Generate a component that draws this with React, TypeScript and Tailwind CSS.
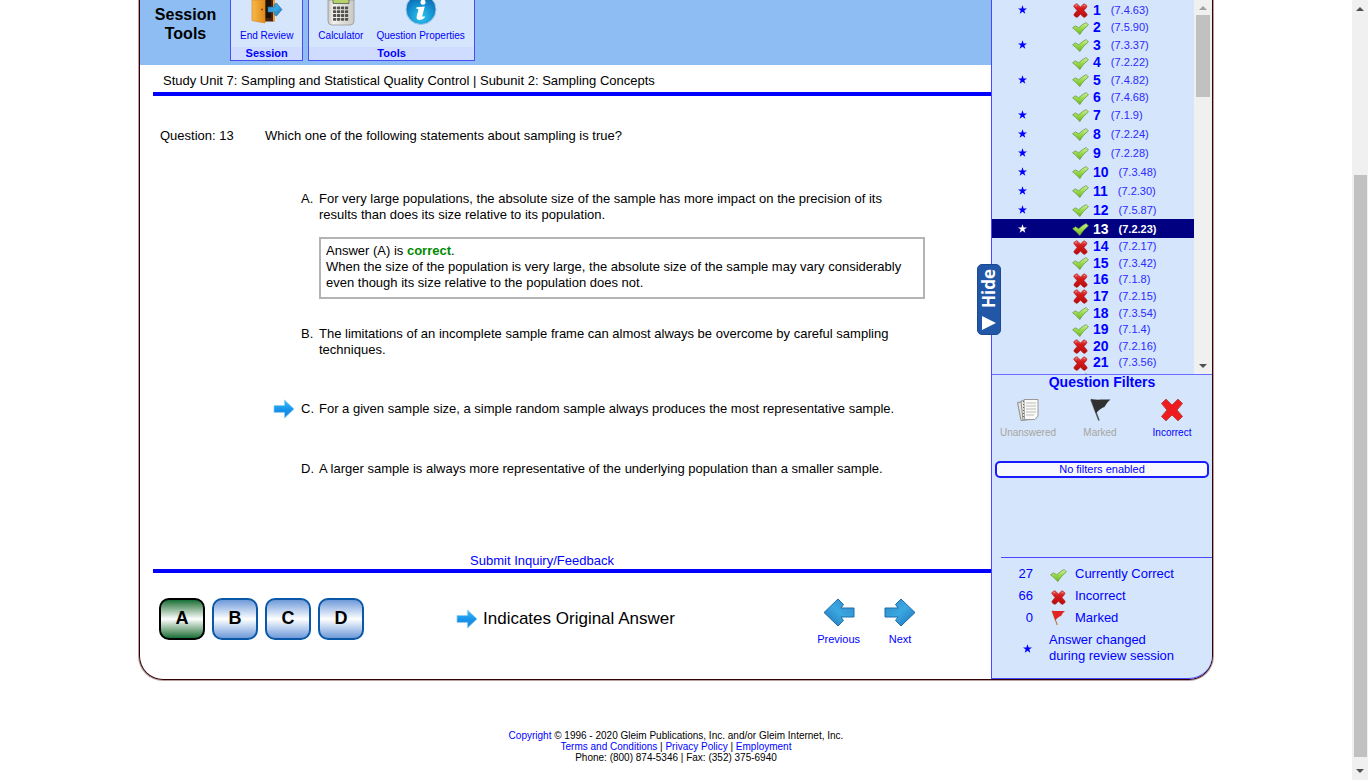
import React from "react";

type Status = "correct" | "incorrect";
type Item = { n: number; ref: string; status: Status; star?: boolean };

const c: Status = "correct";
const x: Status = "incorrect";

const reviewed: Item[] = [
  { n: 1, ref: "7.4.63", status: x, star: true },
  { n: 2, ref: "7.5.90", status: c },
  { n: 3, ref: "7.3.37", status: c, star: true },
  { n: 4, ref: "7.2.22", status: c },
  { n: 5, ref: "7.4.82", status: c, star: true },
  { n: 6, ref: "7.4.68", status: c },
  { n: 7, ref: "7.1.9", status: c, star: true },
  { n: 8, ref: "7.2.24", status: c, star: true },
  { n: 9, ref: "7.2.28", status: c, star: true },
  { n: 10, ref: "7.3.48", status: c, star: true },
  { n: 11, ref: "7.2.30", status: c, star: true },
  { n: 12, ref: "7.5.87", status: c, star: true },
  { n: 13, ref: "7.2.23", status: c, star: true },
];

const upcoming: Item[] = [
  { n: 14, ref: "7.2.17", status: x },
  { n: 15, ref: "7.3.42", status: c },
  { n: 16, ref: "7.1.8", status: x },
  { n: 17, ref: "7.2.15", status: x },
  { n: 18, ref: "7.3.54", status: c },
  { n: 19, ref: "7.1.4", status: c },
  { n: 20, ref: "7.2.16", status: x },
  { n: 21, ref: "7.3.56", status: x },
  { n: 22, ref: "7.2.19", status: c },
];

const CURRENT = 13;

function Defs() {
  return (
    <svg className="absolute h-0 w-0" aria-hidden="true">
      <defs>
        <linearGradient id="gCheck" x1="0" y1="0" x2="0" y2="1">
          <stop offset="0" stopColor="#d2f0a0" />
          <stop offset="0.45" stopColor="#9bdc4c" />
          <stop offset="1" stopColor="#6cb81c" />
        </linearGradient>
        <linearGradient id="gCross" x1="0" y1="0" x2="0" y2="1">
          <stop offset="0" stopColor="#e8605a" />
          <stop offset="0.35" stopColor="#d41c1c" />
          <stop offset="1" stopColor="#b80c0c" />
        </linearGradient>
        <linearGradient id="gArrow" x1="0" y1="0" x2="1" y2="1">
          <stop offset="0" stopColor="#2f86c8" />
          <stop offset="0.5" stopColor="#3ba8e2" />
          <stop offset="1" stopColor="#1d6fb4" />
        </linearGradient>
        <linearGradient id="gSmall" x1="0" y1="0" x2="0" y2="1">
          <stop offset="0" stopColor="#35c0fb" />
          <stop offset="0.55" stopColor="#1791ea" />
          <stop offset="1" stopColor="#2088d8" />
        </linearGradient>
        <linearGradient id="gDoor" x1="0" y1="0" x2="1" y2="0">
          <stop offset="0" stopColor="#f9b94a" />
          <stop offset="1" stopColor="#e08a18" />
        </linearGradient>
        <linearGradient id="gCalc" x1="0" y1="0" x2="1" y2="0">
          <stop offset="0" stopColor="#c4c4c0" />
          <stop offset="0.2" stopColor="#f1f1ee" />
          <stop offset="1" stopColor="#c9c9c5" />
        </linearGradient>
        <radialGradient id="gInfo" cx="0.5" cy="0.75" r="0.75">
          <stop offset="0" stopColor="#31c6f2" />
          <stop offset="0.55" stopColor="#1490d0" />
          <stop offset="1" stopColor="#0b62a8" />
        </radialGradient>
      </defs>
    </svg>
  );
}

function Check() {
  return (
    <svg className="mt-[2px] h-[13px] w-[17px] shrink-0" viewBox="0 0 17 13" aria-hidden="true">
      <path
        d="M.6 5.800 3.400 3.800 6.700 5.800C8.800 3.600 11.400 1.800 14.200.5L16.400 3C13 5.600 10.400 8.400 7.800 12.600 5.600 10 3.400 7.800.6 5.800Z"
        fill="url(#gCheck)"
        stroke="#648f48"
        strokeWidth="0.7"
        strokeLinejoin="round"
      />
    </svg>
  );
}

function Cross() {
  return (
    <svg className="mt-[2px] h-[15px] w-[17px] shrink-0" viewBox="0 0 17 15" aria-hidden="true">
      <path
        d="M1.800 2.600 4.200 .8Q5.200.5 6 1.500L8.500 4.100 11.100 1.300Q12 .6 12.800 1L15 2.800 14.600 4.400 12 7.400 15 11Q15.600 12.200 14.800 12.800L12.600 14.400 11.200 14 8.500 11.200 5.800 14 4.400 14.400 2 12.600Q1.500 11.800 2.200 10.900L5 7.400 2.200 4.200Q1.400 3.200 1.800 2.600Z"
        fill="url(#gCross)"
        stroke="#a82020"
        strokeWidth="0.5"
      />
      <path d="M3.400 3 4.800 2.300M12 2.400 13.200 2.800" stroke="#f8b0a8" strokeWidth="0.7" />
    </svg>
  );
}

function Star() {
  return (
    <svg className="h-[9px] w-[9px]" viewBox="0 0 20 19" fill="currentColor" role="img" aria-label="Answer changed">
      <path d="M10 0 12.5 7H20L14 11.5 16.2 19 10 14.5 3.8 19 6 11.5 0 7H7.500Z" />
    </svg>
  );
}

function SmallArrow() {
  return (
    <svg className="h-5 w-[22px] shrink-0" viewBox="0 0 22 20" aria-hidden="true">
      <path
        d="M1 6.500H11.500V1L21 10 11.500 19V13.500H1Z"
        fill="url(#gSmall)"
        stroke="#8ccdf6"
        strokeWidth="0.8"
        strokeLinejoin="round"
      />
    </svg>
  );
}

function BigArrow({ left }: { left?: boolean }) {
  return (
    <svg className="h-[29px] w-8" viewBox="0 0 32 29" aria-hidden="true">
      <path
        transform={left ? "translate(32 0) scale(-1 1)" : undefined}
        d="M1 10H14L11.500 6.500 17 1 31 14.500 17 28 11.500 22.500 14 19H1Z"
        fill="url(#gArrow)"
        stroke="#1f6ca8"
        strokeWidth="1"
        strokeLinejoin="round"
      />
    </svg>
  );
}

function DoorIcon() {
  return (
    <svg className="h-6 w-8" viewBox="0 0 32 24" aria-hidden="true">
      <path d="M10 0H23V21.500H10Z" fill="#4a2308" />
      <path d="M13 0H20V18H13Z" fill="#1f1008" />
      <path d="M22 0H24V21.500H22Z" fill="#f0a030" />
      <path d="M1 0H14V23L1 20.500Z" fill="url(#gDoor)" stroke="#d98a1c" strokeWidth="0.7" />
      <circle cx="11" cy="9.500" r="1" fill="#7a4308" />
      <path d="M17 7H24L23 4.500 25.500 3 31 9.500 25.500 16 23 14.500 24 12H17Z" fill="url(#gArrow)" stroke="#2272ae" strokeWidth="0.6" />
    </svg>
  );
}

function CalculatorIcon() {
  const keys = [0, 1, 2, 3].flatMap((r) => [0, 1, 2, 3].map((k) => [k, r]));
  return (
    <svg className="h-[26px] w-7" viewBox="0 0 28 26" aria-hidden="true">
      <path d="M1 0H27V21Q27 25 23 25H5Q1 25 1 21Z" fill="url(#gCalc)" stroke="#989894" strokeWidth="0.8" />
      <path d="M6 -2H22V3.500H6Z" fill="#b5d36a" stroke="#555" strokeWidth="0.8" />
      {keys.map(([k, r]) => (
        <rect key={`${k}-${r}`} x={6 + k * 4} y={6.5 + r * 3.8} width="3.2" height="2.8" rx="0.6" fill="#55524e" />
      ))}
    </svg>
  );
}

function InfoIcon() {
  return (
    <svg className="h-[26px] w-8" viewBox="0 0 32 26" aria-hidden="true">
      <circle cx="16" cy="9.500" r="15" fill="url(#gInfo)" stroke="#9ec7e6" strokeWidth="1" />
      <circle cx="18" cy="2.200" r="2.500" fill="#fff" />
      <path d="M11.500 7.200 19.800 6.400 17.200 16Q17 17.600 19.800 16L19.400 18Q15 21.200 12.200 19.200 11.200 18 11.900 15.600L13.400 9.800Q13.400 8.600 11.200 8.800Z" fill="#fff" />
    </svg>
  );
}

function PagesIcon() {
  return (
    <svg className="h-6 w-6" viewBox="0 0 24 24" aria-hidden="true">
      <path d="M1.500 4.500 12 3 14 21 5 22.500Z" fill="#e2e2df" stroke="#8d8d8a" />
      <path d="M5 3 16 2V21.500L7 22Z" fill="#f2f2ef" stroke="#8d8d8a" />
      <path d="M8 1.500H22V18L19 21.500H8.500Z" fill="#fafaf8" stroke="#999" />
      <path d="M10 5H20M10 8H20M10 11H20M10 14H20M10 17H18" stroke="#bcbcb8" />
      <path d="M7.500 3V20" stroke="#666" strokeDasharray="1 2" />
    </svg>
  );
}

function FlagIcon({ red }: { red?: boolean }) {
  return (
    <svg className={red ? "h-4 w-4" : "h-6 w-6"} viewBox="0 0 24 24" aria-hidden="true">
      <path d="M3 1.500 11 22.500" stroke={red ? "#b57a3a" : "#555"} strokeWidth="1.6" />
      <path d="M3 .8C8 2.600 14 1 22.500 1.600 19 4.500 18.500 6 16.500 9 14 9.500 10.500 12 8 15.500Z" fill={red ? "#e32222" : "#303030"} />
    </svg>
  );
}

function RedX() {
  return (
    <svg className="h-6 w-6" viewBox="0 0 24 24" aria-hidden="true">
      <path
        d="M1.500 5.500 6 1.200 12 7 18 1.200 22.500 5.500 17 12 22.500 18.500 18 22.800 12 17 6 22.800 1.500 18.500 7 12Z"
        fill="#ee1c1c"
        stroke="#b84040"
        strokeLinejoin="round"
      />
    </svg>
  );
}

function Row({ item }: { item: Item }) {
  const on = item.n === CURRENT;
  return (
    <li className={item.star ? "h-[19px] shrink-0" : item.n > CURRENT ? "min-h-0 flex-1" : "h-4 shrink-0"}>
      <a
        href="#question"
        className={`flex h-full items-center pl-[26px] ${on ? "bg-[#000080] font-bold text-white" : "text-[#0000ff]"}`}
      >
        <span className="flex w-[54px] shrink-0">{item.star && <Star />}</span>
        {item.status === "correct" ? <Check /> : <Cross />}
        <span className="ml-1 text-sm leading-4 font-bold">{item.n}</span>
        <span className={`ml-[10px] text-[11px] leading-4 ${on ? "" : "text-[#2a2aff]"}`}>({item.ref})</span>
      </a>
    </li>
  );
}

function Choice({
  letter,
  original,
  children,
}: {
  letter: string;
  original?: boolean;
  children: React.ReactNode;
}) {
  return (
    <div className="flex">
      <span className="flex h-4 w-7 shrink-0 items-center">{original && <SmallArrow />}</span>
      <span className="w-[18px] shrink-0">{letter}.</span>
      <div className="min-w-0 flex-1">{children}</div>
    </div>
  );
}

function AnswerButton({ label, active }: { label: string; active?: boolean }) {
  return (
    <button
      type="button"
      className={`h-[42px] w-[46px] rounded-[10px] border-2 pb-[2px] text-lg font-bold text-black ${
        active
          ? "border-black bg-linear-to-b from-[#0c7038] via-white to-[#0c7038]"
          : "border-[#0a58a8] bg-linear-to-b from-[#6f9ad8] via-white to-[#6f9ad8]"
      }`}
    >
      {label}
    </button>
  );
}

function Tool({ icon, label }: { icon: React.ReactNode; label: string }) {
  return (
    <button type="button" className="flex flex-col items-center whitespace-nowrap">
      <span className="flex h-7 items-start">{icon}</span>
      <span className="text-[10px] leading-4">{label}</span>
    </button>
  );
}

function ToolGroup({ title, children }: { title: string; children: React.ReactNode }) {
  return (
    <section className="flex h-[61px] flex-col border border-t-0 border-[#4a50f0] bg-[#d5e5fb] text-[#0000ff]">
      <div className="flex h-[47px] gap-[13px] px-[9px]">{children}</div>
      <h2 className="flex-1 bg-[#d0dcff] text-center text-[11px] leading-[13px] font-bold">{title}</h2>
    </section>
  );
}

function Filter({ icon, label, enabled }: { icon: React.ReactNode; label: string; enabled?: boolean }) {
  return (
    <button
      type="button"
      className={`flex flex-1 flex-col items-center gap-[3px] text-[10px] leading-4 ${
        enabled ? "text-[#0000ff]" : "text-[#a6a6a0]"
      }`}
    >
      {icon}
      {label}
    </button>
  );
}

export default function App() {
  return (
    <div className="flex min-h-screen bg-white font-['Liberation_Sans',Arial,sans-serif] text-[13px] leading-4 text-black">
      <Defs />
      <div className="flex min-w-0 flex-1 flex-col items-center">
        <div className="flex w-full max-w-[1074px] rounded-b-[24px] border border-t-0 border-[#330008] shadow-[0_0_0_1px_#b8a0a0]">
          <main className="flex min-w-0 flex-1 flex-col">
            <header className="flex h-[65px] items-start gap-[5px] bg-[#8dbdf2]">
              <h1 className="w-[85px] shrink-0 pt-[5px] pl-[6px] text-center text-base leading-[19px] font-bold">
                Session
                <br />
                Tools
              </h1>
              <ToolGroup title="Session">
                <Tool icon={<DoorIcon />} label="End Review" />
              </ToolGroup>
              <ToolGroup title="Tools">
                <Tool icon={<CalculatorIcon />} label="Calculator" />
                <Tool icon={<InfoIcon />} label="Question Properties" />
              </ToolGroup>
            </header>

            <h2 className="ml-[13px] border-b-4 border-[#0000ff] pt-2 pb-[3px] pl-[10px]">
              Study Unit 7: Sampling and Statistical Quality Control | Subunit 2: Sampling Concepts
            </h2>

            <div className="flex pt-8 pl-5">
              <span className="w-[105px] shrink-0">Question: 13</span>
              <p>Which one of the following statements about sampling is true?</p>
            </div>

            <div className="flex flex-1 flex-col pt-[47px] pr-16 pb-[76px] pl-[133px]">
              <Choice letter="A">
                <p className="max-w-[590px]">
                  For very large populations, the absolute size of the sample has more impact on the precision of its
                  <br />
                  results than does its size relative to its population.
                </p>
                <div className="mt-[14px] max-w-[606px] border-2 border-[#b4b4b4] px-[5px] pt-1 pb-[6px]">
                  <p>
                    Answer (A) is <b className="text-[#008a00]">correct</b>.
                  </p>
                  <p>
                    When the size of the population is very large, the absolute size of the sample may vary considerably
                    <br />
                    even though its size relative to the population does not.
                  </p>
                </div>
              </Choice>
              <div className="pt-[27px]">
                <Choice letter="B">
                  The limitations of an incomplete sample frame can almost always be overcome by careful sampling
                  <br />
                  techniques.
                </Choice>
              </div>
              <div className="pt-[43px]">
                <Choice letter="C" original>
                  For a given sample size, a simple random sample always produces the most representative sample.
                </Choice>
              </div>
              <div className="pt-11">
                <Choice letter="D">
                  A larger sample is always more representative of the underlying population than a smaller sample.
                </Choice>
              </div>
            </div>

            <div className="ml-[13px] border-b-4 border-[#0000ff] pr-[60px] text-center">
              <a href="#feedback" className="text-[#0000ff]">
                Submit Inquiry/Feedback
              </a>
            </div>

            <div className="flex h-[106px] items-start pt-[25px] pr-[75px] pl-[19px]">
              <div className="flex gap-[7px]">
                <AnswerButton label="A" active />
                <AnswerButton label="B" />
                <AnswerButton label="C" />
                <AnswerButton label="D" />
              </div>
              <p className="ml-[92px] flex h-[42px] items-center gap-[5px] text-[17px]">
                <SmallArrow />
                Indicates Original Answer
              </p>
              <nav className="ml-auto flex gap-6 text-[11px] text-[#0000ff]">
                <button type="button" className="flex flex-col items-center gap-1">
                  <BigArrow left />
                  Previous
                </button>
                <button type="button" className="flex flex-col items-center gap-1">
                  <BigArrow />
                  Next
                </button>
              </nav>
            </div>
          </main>

          <aside className="relative flex w-[221px] shrink-0 flex-col rounded-br-[23px] border-b border-l border-[#4848ff] bg-[#d5e5fb]">
            <button
              type="button"
              aria-label="Hide"
              className="absolute top-[264px] -left-[15px] flex h-[71px] w-6 flex-col items-center justify-between rounded-[5px] border border-[#1c4a90] bg-[#2257a8] py-1 text-white"
            >
              <span className="rotate-180 font-['Open_Sans','Noto_Sans',sans-serif] text-[17px] leading-[18px] font-bold [writing-mode:vertical-rl]">
                Hide
              </span>
              <svg className="h-[14px] w-[14px]" viewBox="0 0 14 14" fill="currentColor" aria-hidden="true">
                <path d="M0 0 14 7 0 14Z" />
              </svg>
            </button>

            <div className="flex h-[375px] overflow-hidden border-b border-[#6a6aff]">
              <ul className="flex min-w-0 flex-1 flex-col">
                {reviewed.map((i) => (
                  <Row key={i.n} item={i} />
                ))}
                <li className="shrink-0">
                  <ul className="flex h-[149px] flex-col">
                    {upcoming.map((i) => (
                      <Row key={i.n} item={i} />
                    ))}
                  </ul>
                </li>
              </ul>
              <div className="flex w-[18px] flex-col items-center bg-[#f0f0f0] py-[6px]">
                <svg className="h-1 w-2" viewBox="0 0 8 4" aria-hidden="true">
                  <path d="M4 0 8 4H0Z" fill="#a0a0a0" />
                </svg>
                <div className="mt-[5px] h-[82px] w-[14px] bg-[#c1c1c1]" />
                <svg className="mt-auto h-1 w-2" viewBox="0 0 8 4" aria-hidden="true">
                  <path d="M0 0H8L4 4Z" fill="#505050" />
                </svg>
              </div>
            </div>

            <h2 className="text-center text-sm leading-[15px] font-bold text-[#0000ff]">Question Filters</h2>
            <div className="mt-2 flex pr-1">
              <Filter icon={<PagesIcon />} label="Unanswered" />
              <Filter icon={<FlagIcon />} label="Marked" />
              <Filter icon={<RedX />} label="Incorrect" enabled />
            </div>
            <p className="mx-[3px] mt-5 rounded-[5px] border-2 border-[#1a1aff] bg-[#f8f8ff] text-center text-[11px] leading-[13px] text-[#0000ff]">
              No filters enabled
            </p>

            <div className="mt-auto ml-[9px] border-t border-[#4848ff] pt-[5px] pb-[14px] pl-4 text-[#0000ff]">
              <dl className="grid grid-cols-[16px_18px_1fr] items-center gap-x-[17px] leading-[22px] [&>dt]:text-right">
                <dt>27</dt>
                <dd>
                  <Check />
                </dd>
                <dd className="-ml-[10px]">Currently Correct</dd>
                <dt>66</dt>
                <dd>
                  <Cross />
                </dd>
                <dd className="-ml-[10px]">Incorrect</dd>
                <dt>0</dt>
                <dd>
                  <FlagIcon red />
                </dd>
                <dd className="-ml-[10px]">Marked</dd>
              </dl>
              <p className="flex items-center gap-[17px] pt-[3px] pl-[6px]">
                <Star />
                <span>
                  Answer changed
                  <br />
                  during review session
                </span>
              </p>
            </div>
          </aside>
        </div>

        <footer className="pt-[50px] text-center text-[10px] leading-[11px] text-black">
          <p>
            <a href="#copyright" className="text-[#0000ff]">Copyright</a> © 1996 - 2020 Gleim Publications, Inc. and/or Gleim
            Internet, Inc.
          </p>
          <p>
            <a href="#terms" className="text-[#0000ff]">Terms and Conditions</a> |{" "}
            <a href="#privacy" className="text-[#0000ff]">Privacy Policy</a> |{" "}
            <a href="#employment" className="text-[#0000ff]">Employment</a>
          </p>
          <p>Phone: (800) 874-5346 | Fax: (352) 375-6940</p>
        </footer>
      </div>

      <div className="flex w-4 shrink-0 flex-col items-center bg-[#f0f0f0] py-[7px]">
        <svg className="h-1 w-2" viewBox="0 0 8 4" aria-hidden="true">
          <path d="M4 0 8 4H0Z" fill="#505050" />
        </svg>
        <div className="mt-[164px] mb-3 w-[13px] flex-1 bg-[#c1c1c1]" />
        <svg className="h-1 w-2" viewBox="0 0 8 4" aria-hidden="true">
          <path d="M0 0H8L4 4Z" fill="#505050" />
        </svg>
      </div>
    </div>
  );
}
